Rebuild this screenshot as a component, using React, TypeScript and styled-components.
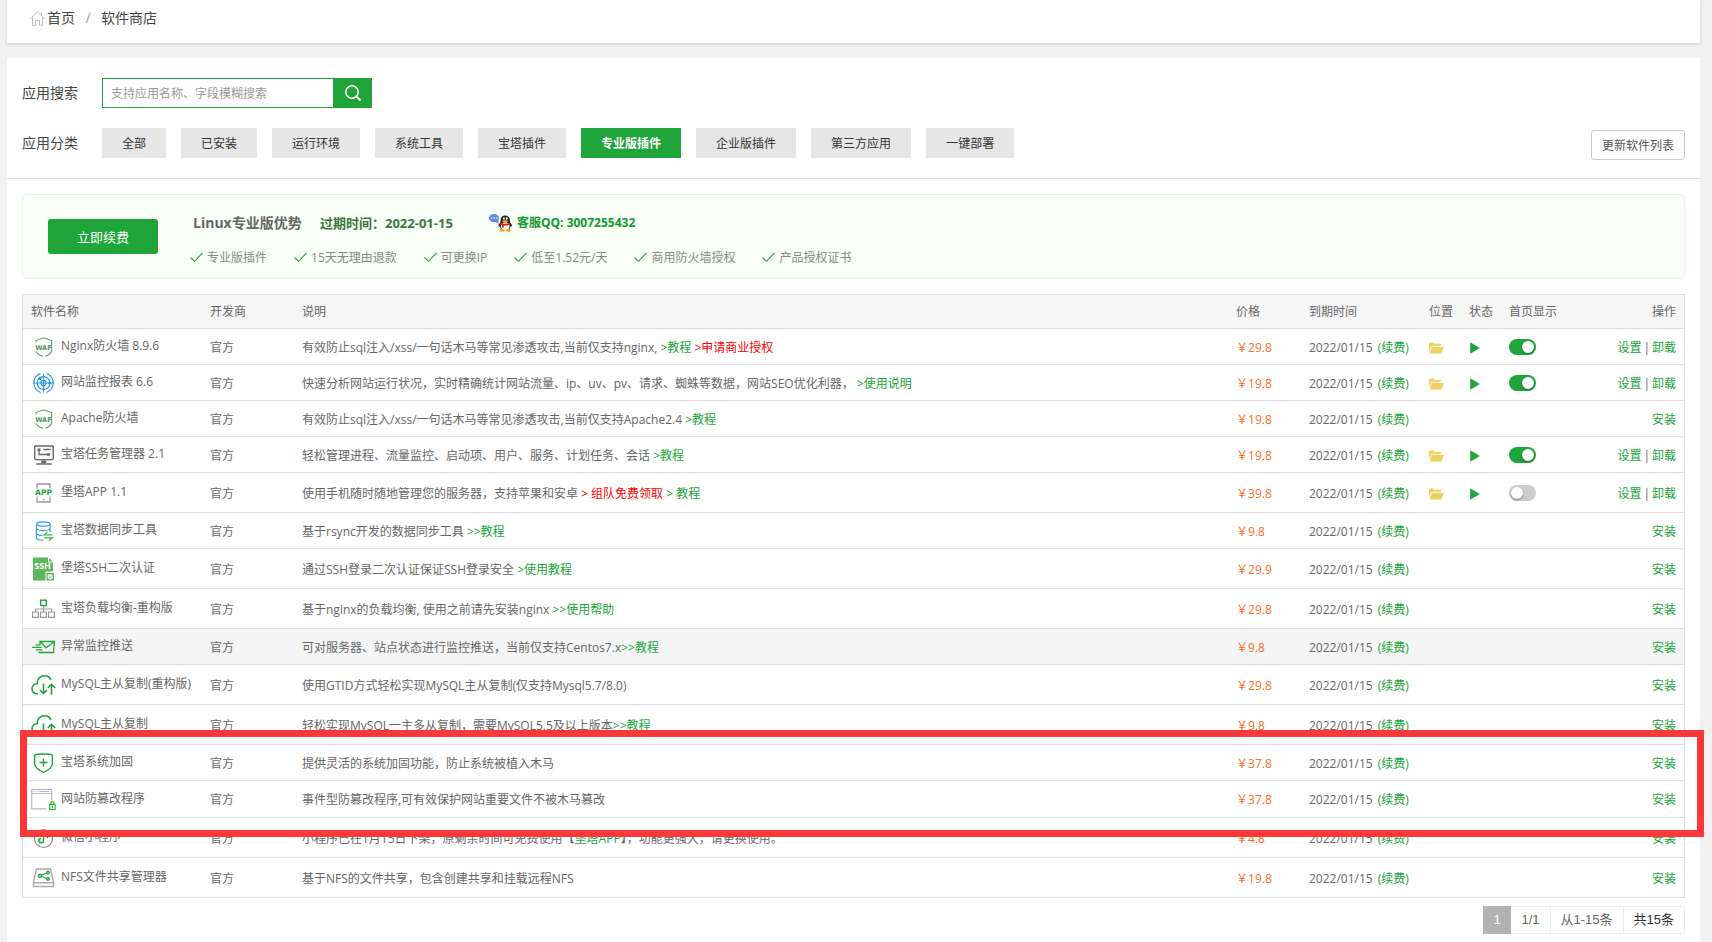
import React from "react";
import styled, { createGlobalStyle } from "styled-components";

const GREEN = "#20a53a";
const LINE = "#ddd";

const GlobalStyle = createGlobalStyle`
  *, *::before, *::after { box-sizing: border-box; }
  body {
    margin: 0;
    background: #f1f1f1;
    color: #666;
    font-family: "Open Sans", "Noto Sans CJK SC", sans-serif;
    font-size: 12px;
    line-height: 18px;
  }
  button, input { font-family: inherit; }
  a { color: ${GREEN}; text-decoration: none; }
`;

const Page = styled.div`
  min-height: 100vh;
  display: flex;
  flex-direction: column;
  gap: 15px;
  padding: 0 12px 0 7px;
`;

const Header = styled.header`
  height: 43px;
  padding-left: 23px;
  background: #fff;
  box-shadow: 0 1px 3px rgba(0, 0, 0, 0.15);
`;

const Breadcrumb = styled.nav`
  display: flex;
  align-items: center;
  height: 36px;
  font-size: 14px;
  color: #444;
  a { display: flex; align-items: center; gap: 2px; color: #444; }
`;

const Slash = styled.span`
  width: 26px;
  text-align: center;
  color: #999;
`;

const Main = styled.main`
  flex: 1;
  background: #fff;
  padding: 20px 0 8px;
`;

const Filters = styled.section`
  display: flex;
  justify-content: space-between;
  align-items: flex-end;
  padding: 0 15px 18px;
  border-bottom: 1px solid ${LINE};
`;

const FilterRows = styled.div`
  display: flex;
  flex-direction: column;
  gap: 20px;
  padding-bottom: 2px;
`;

const FilterRow = styled.div`
  display: flex;
  align-items: center;
  height: 30px;
`;

const FilterLabel = styled.label`
  width: 80px;
  font-size: 14px;
  color: #444;
`;

const SearchInput = styled.input`
  width: 231px;
  height: 30px;
  padding: 0 8px;
  border: 1px solid ${GREEN};
  border-right: 0;
  outline: 0;
  font-size: 12px;
  color: #555;
  &::placeholder { color: #999; }
`;

const SearchButton = styled.button`
  display: flex;
  align-items: center;
  justify-content: center;
  width: 39px;
  height: 30px;
  padding: 0;
  border: 0;
  background: ${GREEN};
`;

const Categories = styled.div`
  display: flex;
  gap: 15px;
`;

const CategoryButton = styled.button<{ $active: boolean }>`
  height: 30px;
  padding: 0 20px;
  border: 0;
  font-size: 12px;
  background: ${(p) => (p.$active ? GREEN : "#e6e6e6")};
  color: ${(p) => (p.$active ? "#fff" : "#333")};
  font-weight: ${(p) => (p.$active ? 700 : 400)};
`;

const UpdateButton = styled.button`
  height: 30px;
  padding: 0 10px;
  border: 1px solid #ccc;
  border-radius: 3px;
  background: #fff;
  font-size: 12px;
  color: #555;
`;

const Content = styled.section`
  padding: 15px 15px 0;
`;

const Banner = styled.div`
  display: flex;
  align-items: center;
  gap: 32px;
  height: 85px;
  padding: 0 25px;
  border: 1px solid #e6f2f0;
  border-radius: 5px;
  background: #f9fef7;
`;

const RenewButton = styled.button`
  width: 110px;
  height: 35px;
  border: 0;
  border-radius: 3px;
  background: ${GREEN};
  color: #fff;
  font-size: 13px;
`;

const BannerInfo = styled.div`
  display: flex;
  flex-direction: column;
  gap: 16px;
  padding-top: 6px;
`;

const BannerTop = styled.div`
  display: flex;
  align-items: center;
  height: 20px;
  padding-left: 3px;
  font-weight: 700;
`;

const BannerTitle = styled.span`
  width: 127px;
  font-size: 14px;
`;

const Expiry = styled.span`
  width: 169px;
  font-size: 13px;
  color: #3c763d;
`;

const QQLink = styled.a`
  display: flex;
  align-items: center;
  gap: 4px;
  color: #119a2c;
`;

const Perks = styled.ul`
  display: flex;
  gap: 27px;
  margin: 0;
  padding: 0;
  list-style: none;
  font-size: 12px;
  color: #888;
`;

const Perk = styled.li`
  display: flex;
  align-items: center;
  gap: 4px;
`;

const TableWrap = styled.div`
  position: relative;
  margin-top: 15px;
`;

const Table = styled.table`
  width: 100%;
  table-layout: fixed;
  border-collapse: separate;
  border-spacing: 0;
  border: 1px solid ${LINE};
  border-bottom: 0;
`;

const Th = styled.th<{ $right?: boolean }>`
  height: 34px;
  padding: 0 8px;
  border-bottom: 1px solid ${LINE};
  background: #f6f6f6;
  font-weight: 400;
  text-align: ${(p) => (p.$right ? "right" : "left")};
  white-space: nowrap;
`;

const Tr = styled.tr<{ $height: number; $hovered?: boolean }>`
  height: ${(p) => p.$height}px;
  background: ${(p) => (p.$hovered ? "#f5f5f5" : "#fff")};
`;

const Td = styled.td`
  padding: 2px 8px 0;
  border-bottom: 1px solid ${LINE};
  vertical-align: middle;
  white-space: nowrap;
`;

const WidgetTd = styled(Td)`
  padding-top: 0;
`;

const NameBox = styled.div`
  display: flex;
  align-items: center;
  gap: 5px;
  svg { flex: none; }
  span { padding-bottom: 1px; }
`;

const Price = styled.span`
  color: #fc6d26;
`;

const RenewLink = styled.a`
  margin-left: 2px;
`;

const RedLink = styled.a`
  color: #f00;
`;

const Actions = styled.div`
  display: flex;
  justify-content: flex-end;
  gap: 2px;
`;

const IconButton = styled.button`
  display: flex;
  justify-content: center;
  min-width: 12px;
  padding: 0;
  border: 0;
  background: none;
`;

const Switch = styled.input`
  display: block;
  appearance: none;
  position: relative;
  width: 27px;
  height: 16px;
  margin: 0;
  border-radius: 8px;
  background: #ccc;
  &::after {
    content: "";
    position: absolute;
    top: 2px;
    left: 2px;
    width: 12px;
    height: 12px;
    border-radius: 50%;
    background: #fff;
    box-shadow: 0 1px 2px rgba(0, 0, 0, 0.4);
  }
  &:checked { background: ${GREEN}; }
  &:checked::after { left: 13px; }
`;

const Highlight = styled.div`
  position: absolute;
  top: 436px;
  left: -2px;
  right: -19px;
  height: 107px;
  border: 7px solid #fd3838;
  pointer-events: none;
`;

const Pager = styled.nav`
  display: flex;
  justify-content: flex-end;
  margin-top: 8px;
  font-family: "Liberation Sans", "Noto Sans CJK SC", sans-serif;
  font-size: 13px;
`;

const PagerCell = styled.span<{ $strong?: boolean }>`
  height: 28px;
  padding: 0 10px;
  border: 1px solid #ececec;
  border-left-width: 0;
  line-height: 26px;
  color: ${(p) => (p.$strong ? "#333" : "#666")};
`;

const PagerCurrent = styled(PagerCell)`
  width: 28px;
  border-color: #b2b2b2;
  background: #b2b2b2;
  color: #fff;
  text-align: center;
`;

const HomeIcon = () => (
  <svg width="15" height="15" viewBox="0 0 15 15" fill="none" stroke="#bbb">
    <path d="M0.5 7.5 7.5 0.8 14.5 7.5M2.5 6.5V14.3H5.5V9.5H9.5V14.3H12.5V6.5M11.5 4.5V1.5" />
  </svg>
);

const SearchIcon = () => (
  <svg width="18" height="18" viewBox="0 0 18 18" fill="none" stroke="#fff" strokeWidth="1.6">
    <circle cx="8" cy="8" r="6.2" />
    <path d="M12.4 12.4 16.5 16.5" strokeWidth="2" />
  </svg>
);

const Tick = () => (
  <svg width="13" height="11" viewBox="0 0 13 11" fill="none" stroke={GREEN} strokeWidth="1.1">
    <path d="M0.5 5.5 4.5 9.3 12.5 1" />
  </svg>
);

const QQIcon = () => (
  <svg width="24" height="18" viewBox="0 0 24 18">
    <ellipse cx="5" cy="4.2" rx="5" ry="4.1" fill="#5f8be0" />
    <path d="M6 7.5 10 10 9 5.5Z" fill="#5f8be0" />
    <path d="M2 4.2H3.3M4.5 4.2H5.8M7 4.2H8.3" stroke="#fff" strokeWidth="1.2" />
    <path d="M9.3 12.5C9.3 10 11 9.5 11.5 8C11.3 3.5 13 1.5 16.2 1.5S21.2 3.5 21 8C21.5 9.5 23.2 10 23.2 12.5L21.8 12.2 20.5 15H12L10.6 12.2Z" fill="#252525" />
    <ellipse cx="16.2" cy="12.3" rx="4.3" ry="4" fill="#fff" />
    <ellipse cx="14.8" cy="4.6" rx="1" ry="1.4" fill="#fff" />
    <ellipse cx="17.7" cy="4.6" rx="1" ry="1.4" fill="#fff" />
    <ellipse cx="16.2" cy="7.3" rx="3" ry="1" fill="#f6a51c" />
    <path d="M11.5 8.5Q16.2 11 21 8.5V10.4Q18 11.8 14.8 11.2V13.5H13V10.8L11.5 10.2Z" fill="#e8170c" />
    <ellipse cx="13" cy="16.4" rx="2.6" ry="1.3" fill="#f6a51c" />
    <ellipse cx="19.4" cy="16.4" rx="2.6" ry="1.3" fill="#f6a51c" />
  </svg>
);

const FolderIcon = () => (
  <svg width="15" height="12" viewBox="0 0 15 12" fill="#efd162">
    <path d="M0 10V1.2Q0 0.5 0.8 0.5H4.2L5.4 1.8H11.2Q12 1.8 12 2.6V3.8H3.4L2.2 4.6Z" />
    <path d="M3 4.8H15L12.4 11.5H0.4Z" />
  </svg>
);

const PlayIcon = () => (
  <svg width="10" height="12" viewBox="0 0 10 12" fill={GREEN}>
    <path d="M0.2 0.3 9.8 6 0.2 11.7Z" />
  </svg>
);

type IconKind =
  | "waf" | "radar" | "monitor" | "app" | "db" | "ssh" | "balance"
  | "mail" | "cloud" | "shield" | "window" | "mini" | "nfs";

const iconShapes: Record<IconKind, React.ReactNode> = {
  waf: (
    <g stroke="#5fa069" strokeWidth="1.1">
      <path d="M5 7.5V5.6L12.5 2.8 20.6 5.6V16Q19 20 14.5 21.2M5 16.5Q7 20.2 12 21.2" />
      <text x="12.4" y="14.6" textAnchor="middle" fontFamily="DejaVu Sans" fontSize="6.5" fontWeight="700" fill="#4d9558" stroke="none">WAF</text>
    </g>
  ),
  radar: (
    <g stroke="#1f97db" strokeWidth="1.1">
      <path d="M9.5 2.6A10 10 0 0 0 9.5 21.4M15.5 2.6A10 10 0 0 1 15.5 21.4" />
      <circle cx="12.5" cy="12" r="6.4" />
      <circle cx="12.5" cy="12" r="2.6" />
      <path d="M12.5 2.5V21.5M2 12H23" />
      <circle cx="9" cy="7.5" r="1" fill="#1f97db" />
      <circle cx="18.8" cy="12" r="1" fill="#1f97db" />
    </g>
  ),
  monitor: (
    <g stroke="#666" strokeWidth="1.4">
      <rect x="3.7" y="3" width="18.6" height="13.6" rx="1" />
      <path d="M8 7V11.5H16M12.5 6.5H19.5" />
      <path d="M6.5 5.5H9.5V8H6.5ZM16 10.2H19V12.8H16ZM10.2 17.5H15.2V20.5H10.2Z" fill="#666" stroke="none" />
      <path d="M5 21H21" />
    </g>
  ),
  app: (
    <g stroke="#999" strokeWidth="1.3">
      <path d="M6 7.5V3H19V7.5M6 15.5V21H19V15.5M11.8 18.5H13.4" />
      <text x="12.5" y="14.2" textAnchor="middle" fontFamily="DejaVu Sans" fontSize="7.5" fontWeight="700" fill={GREEN} stroke="none">APP</text>
    </g>
  ),
  db: (
    <g stroke="#2d9fe0" strokeWidth="1.2">
      <ellipse cx="12.3" cy="5" rx="6.8" ry="2.2" />
      <path d="M5.5 5V19.5Q6.5 21 12.5 21.3M19.1 5V13M5.5 9.5Q7 11.7 12.3 11.7T19.1 9.5M5.5 14.5Q7 16.5 11.5 16.6" />
      <path d="M21.5 15.8H13L16.5 13M13 18.8H21.5L18 21.5" stroke="#43b257" />
    </g>
  ),
  ssh: (
    <g>
      <path d="M2 0.5H17.5L22 5V14.5H14.5V23.5H2Z" fill="#5db85b" />
      <path d="M17.5 0.5V5H22" stroke="#fff" />
      <text x="11.6" y="12.4" textAnchor="middle" fontFamily="Open Sans" fontSize="9" fontWeight="700" fill="#fff">SSH</text>
      <rect x="15.5" y="16" width="7.5" height="7.5" fill="#5db85b" />
      <path d="M19.2 17 21.8 18V20.2Q21.3 21.8 19.2 22.6 17.2 21.8 16.7 20.2V18Z" fill="#fff" />
      <path d="M18 19.6 19 20.8 20.8 18.8" stroke="#5db85b" />
    </g>
  ),
  balance: (
    <g stroke="#999" strokeWidth="1.2">
      <path d="M12.5 9V15M4.5 15V12H20.5V15" />
      <path d="M1.6 15H7.4V20.3H1.6ZM9.6 15H15.4V20.3H9.6ZM17.6 15H23.4V20.3H17.6Z" />
      <rect x="9.7" y="3.2" width="5.6" height="5.3" stroke={GREEN} strokeWidth="1.4" />
    </g>
  ),
  mail: (
    <g stroke={GREEN} strokeWidth="1.3">
      <path d="M9 10V6.5H23.5L22.5 17.5H7.5M9.5 6.8 15 12.8 23.3 6.8M4.5 9.8H9.5M1 12.3H10.5M5 14.8H11.5" />
    </g>
  ),
  cloud: (
    <g stroke={GREEN} strokeWidth="1.6">
      <path d="M7 21C3 21 1 18.5 1 15.6S3.5 10.6 6.3 10.7C5.8 6 9.5 2.6 13.6 2.7 17 2.8 19.2 4.5 19.8 7M12.5 10.5V20.5M8.8 17 12.5 20.5 16 17M20.5 21.8V11.5M16.8 15 20.5 11.3 24.3 15" />
    </g>
  ),
  shield: (
    <g stroke={GREEN} strokeWidth="1.4">
      <path d="M6 3.2Q12.5 2.8 19 3.2 21.4 3.2 21.4 5V12.5Q20.8 18 12.5 21.3 4.2 18 3.6 12.5V5Q3.6 3.2 6 3.2ZM12.5 7.5V15.5M8.5 11.5H16.5" />
    </g>
  ),
  window: (
    <g stroke="#b8b5cc" strokeWidth="1.2">
      <path d="M15 21.8H0.7V2.5H20.7V13M0.7 6.5H20.7M2.5 4.5H3.8M5.2 4.5H6.5M8 4.5H18" />
      <path d="M18.6 17.5H24.2V22.4H18.6ZM19.8 17.5V15.8Q21.4 13.4 23 15.8V17.5M21.4 19V21" stroke="#1fc22f" strokeWidth="1.1" />
    </g>
  ),
  mini: (
    <g stroke="#888" strokeWidth="1.2">
      <circle cx="12.5" cy="12.5" r="9" />
      <path d="M12.5 14.5A2.3 2.3 0 1 1 10 12.2M12.5 14.5V10A2.3 2.3 0 1 1 15.5 12" stroke={GREEN} strokeWidth="1.5" />
    </g>
  ),
  nfs: (
    <g stroke="#aaa" strokeWidth="1.4">
      <path d="M5.5 3H19.5L22.5 16V20.5H2.5V16ZM3 16.8H22" />
      <path d="M17 6.5 9 9.7 17 13" stroke={GREEN} strokeWidth="1.2" />
      <g stroke={GREEN} fill="#fff">
        <circle cx="17" cy="6.5" r="1.2" />
        <circle cx="9" cy="9.7" r="1.5" />
        <circle cx="17" cy="13" r="1.2" />
      </g>
    </g>
  ),
};

const AppIcon = ({ kind }: { kind: IconKind }) => (
  <svg width="25" height="24" viewBox="0 0 25 24" fill="none" aria-hidden="true">
    {iconShapes[kind]}
  </svg>
);

interface Software {
  icon: IconKind;
  name: string;
  desc: React.ReactNode;
  price: string;
  height: number;
  hovered?: boolean;
  installed?: boolean;
  onHome?: boolean;
}

const L = ({ children }: { children: React.ReactNode }) => <a href="#help">{children}</a>;

const rows: Software[] = [
  { icon: "waf", name: "Nginx防火墙 8.9.6", desc: <>有效防止sql注入/xss/一句话木马等常见渗透攻击,当前仅支持nginx, <L>&gt;教程</L> <RedLink href="#license">&gt;申请商业授权</RedLink></>, price: "29.8", height: 36, installed: true, onHome: true },
  { icon: "radar", name: "网站监控报表 6.6", desc: <>快速分析网站运行状况，实时精确统计网站流量、ip、uv、pv、请求、蜘蛛等数据，网站SEO优化利器， <L>&gt;使用说明</L></>, price: "19.8", height: 36, installed: true, onHome: true },
  { icon: "waf", name: "Apache防火墙", desc: <>有效防止sql注入/xss/一句话木马等常见渗透攻击,当前仅支持Apache2.4 <L>&gt;教程</L></>, price: "19.8", height: 36 },
  { icon: "monitor", name: "宝塔任务管理器 2.1", desc: <>轻松管理进程、流量监控、启动项、用户、服务、计划任务、会话 <L>&gt;教程</L></>, price: "19.8", height: 36, installed: true, onHome: true },
  { icon: "app", name: "堡塔APP 1.1", desc: <>使用手机随时随地管理您的服务器，支持苹果和安卓 <RedLink href="#team">&gt; 组队免费领取</RedLink> <L>&gt; 教程</L></>, price: "39.8", height: 40, installed: true },
  { icon: "db", name: "宝塔数据同步工具", desc: <>基于rsync开发的数据同步工具 <L>&gt;&gt;教程</L></>, price: "9.8", height: 36 },
  { icon: "ssh", name: "堡塔SSH二次认证", desc: <>通过SSH登录二次认证保证SSH登录安全 <L>&gt;使用教程</L></>, price: "29.9", height: 40 },
  { icon: "balance", name: "宝塔负载均衡-重构版", desc: <>基于nginx的负载均衡, 使用之前请先安装nginx <L>&gt;&gt;使用帮助</L></>, price: "29.8", height: 40 },
  { icon: "mail", name: "异常监控推送", desc: <>可对服务器、站点状态进行监控推送，当前仅支持Centos7.x<L>&gt;&gt;教程</L></>, price: "9.8", height: 36, hovered: true },
  { icon: "cloud", name: "MySQL主从复制(重构版)", desc: "使用GTID方式轻松实现MySQL主从复制(仅支持Mysql5.7/8.0)", price: "29.8", height: 40 },
  { icon: "cloud", name: "MySQL主从复制", desc: <>轻松实现MySQL一主多从复制，需要MySQL5.5及以上版本<L>&gt;&gt;教程</L></>, price: "9.8", height: 40 },
  { icon: "shield", name: "宝塔系统加固", desc: "提供灵活的系统加固功能，防止系统被植入木马", price: "37.8", height: 36 },
  { icon: "window", name: "网站防篡改程序", desc: "事件型防篡改程序,可有效保护网站重要文件不被木马篡改", price: "37.8", height: 37 },
  { icon: "mini", name: "微信小程序", desc: <>小程序已在1月15日下架，原剩余时间可免费使用【<L>堡塔APP</L>】，功能更强大，请更换使用。</>, price: "4.8", height: 40 },
  { icon: "nfs", name: "NFS文件共享管理器", desc: "基于NFS的文件共享，包含创建共享和挂载远程NFS", price: "19.8", height: 40 },
];

const categories = ["全部", "已安装", "运行环境", "系统工具", "宝塔插件", "专业版插件", "企业版插件", "第三方应用", "一键部署"];
const perks = ["专业版插件", "15天无理由退款", "可更换IP", "低至1.52元/天", "商用防火墙授权", "产品授权证书"];

const SoftwareRow = ({ item }: { item: Software }) => (
  <Tr $height={item.height} $hovered={item.hovered}>
    <WidgetTd>
      <NameBox>
        <AppIcon kind={item.icon} />
        <span>{item.name}</span>
      </NameBox>
    </WidgetTd>
    <Td>官方</Td>
    <Td>{item.desc}</Td>
    <Td><Price>￥{item.price}</Price></Td>
    <Td>2022/01/15 <RenewLink href="#renew">(续费)</RenewLink></Td>
    <Td>{item.installed && <IconButton aria-label="打开目录"><FolderIcon /></IconButton>}</Td>
    <Td>{item.installed && <IconButton aria-label="运行中"><PlayIcon /></IconButton>}</Td>
    <WidgetTd>
      {item.installed && <Switch type="checkbox" defaultChecked={item.onHome} aria-label={`${item.name} 首页显示`} />}
    </WidgetTd>
    <Td>
      <Actions>
        {item.installed ? <><a href="#set">设置</a><span>|</span><a href="#remove">卸载</a></> : <a href="#install">安装</a>}
      </Actions>
    </Td>
  </Tr>
);

export default function App() {
  return (
    <>
      <GlobalStyle />
      <Page>
        <Header>
          <Breadcrumb>
            <a href="#home"><HomeIcon />首页</a>
            <Slash>/</Slash>
            <span>软件商店</span>
          </Breadcrumb>
        </Header>
        <Main>
          <Filters>
            <FilterRows>
              <FilterRow>
                <FilterLabel htmlFor="search">应用搜索</FilterLabel>
                <SearchInput id="search" type="text" placeholder="支持应用名称、字段模糊搜索" />
                <SearchButton aria-label="搜索"><SearchIcon /></SearchButton>
              </FilterRow>
              <FilterRow>
                <FilterLabel as="span">应用分类</FilterLabel>
                <Categories>
                  {categories.map((c) => (
                    <CategoryButton key={c} $active={c === "专业版插件"}>{c}</CategoryButton>
                  ))}
                </Categories>
              </FilterRow>
            </FilterRows>
            <UpdateButton>更新软件列表</UpdateButton>
          </Filters>
          <Content>
            <Banner>
              <RenewButton>立即续费</RenewButton>
              <BannerInfo>
                <BannerTop>
                  <BannerTitle>Linux专业版优势</BannerTitle>
                  <Expiry>过期时间：2022-01-15</Expiry>
                  <QQLink href="#qq"><QQIcon />客服QQ: 3007255432</QQLink>
                </BannerTop>
                <Perks>
                  {perks.map((p) => <Perk key={p}><Tick />{p}</Perk>)}
                </Perks>
              </BannerInfo>
            </Banner>
            <TableWrap>
              <Table>
                <colgroup>
                  <col width="179" />
                  <col width="92" />
                  <col />
                  <col width="73" />
                  <col width="120" />
                  <col width="40" />
                  <col width="40" />
                  <col width="90" />
                  <col width="93" />
                </colgroup>
                <thead>
                  <tr>
                    <Th>软件名称</Th>
                    <Th>开发商</Th>
                    <Th>说明</Th>
                    <Th>价格</Th>
                    <Th>到期时间</Th>
                    <Th>位置</Th>
                    <Th>状态</Th>
                    <Th>首页显示</Th>
                    <Th $right>操作</Th>
                  </tr>
                </thead>
                <tbody>
                  {rows.map((r) => <SoftwareRow key={r.name} item={r} />)}
                </tbody>
              </Table>
              <Highlight />
            </TableWrap>
            <Pager aria-label="分页">
              <PagerCurrent>1</PagerCurrent>
              <PagerCell>1/1</PagerCell>
              <PagerCell>从1-15条</PagerCell>
              <PagerCell $strong>共15条</PagerCell>
            </Pager>
          </Content>
        </Main>
      </Page>
    </>
  );
}
